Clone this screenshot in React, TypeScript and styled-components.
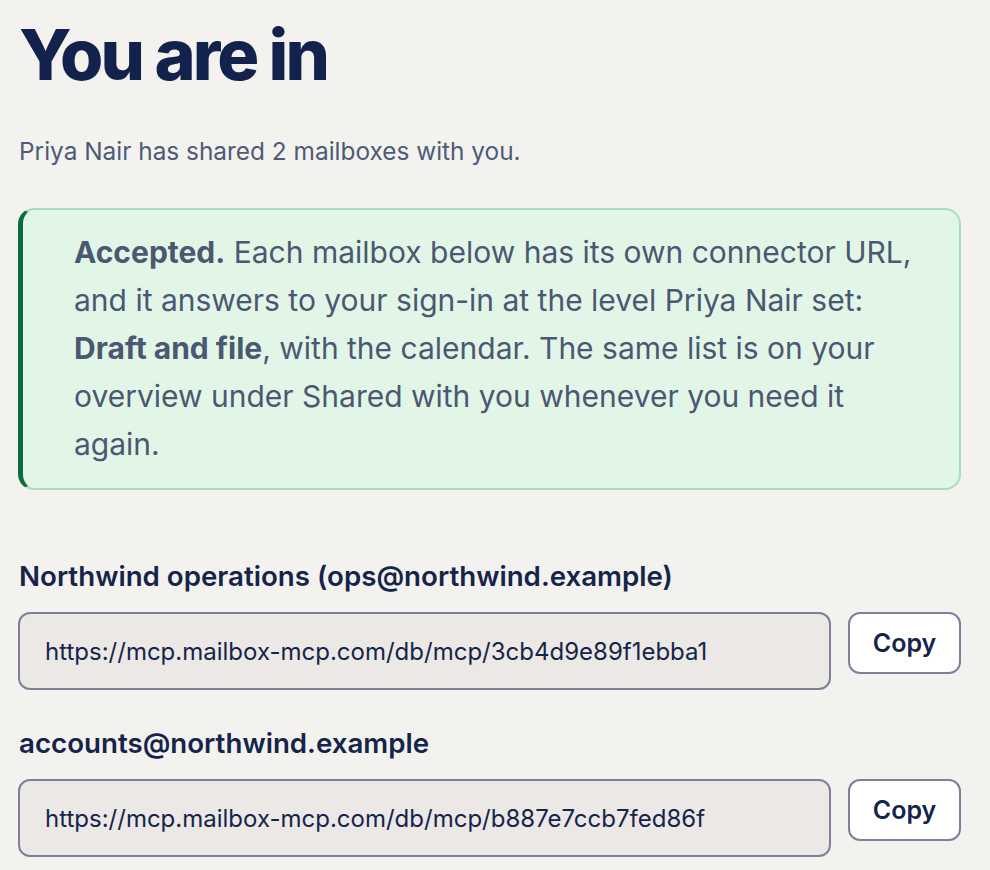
import { FC } from "react";
import styled, { createGlobalStyle } from "styled-components";

const GlobalStyle = createGlobalStyle`
  html, body {
    margin: 0;
    padding: 0;
    background: #f4f2ee;
  }
  body {
    font-family: Inter, "Noto Sans", sans-serif;
    color: #15244a;
  }
  * {
    box-sizing: border-box;
  }
`;

const Page = styled.main`
  width: 990px;
  padding: 13px 29px 0 18px;
`;

const Title = styled.h1`
  margin: 0 0 0 1px;
  font-family: Inter, sans-serif;
  font-size: 70px;
  font-weight: 800;
  letter-spacing: -0.042em;
  line-height: 84px;
  color: #13224d;
`;

const Lead = styled.p`
  margin: 40px 0 0 1px;
  font-size: 24.4px;
  line-height: 28px;
  color: #4d5b78;
`;

const Callout = styled.div`
  margin-top: 43px;
  padding: 18px 40px 20px 51px;
  background: #e2f6e7;
  border: 2px solid #a7dfbb;
  border-left: 5px solid #0e6b3c;
  border-radius: 16px;
  font-size: 30px;
  line-height: 48px;
  color: #4a5872;

  strong {
    font-weight: 700;
  }
`;

const Mailbox = styled.section`
  margin-top: 70px;

  & + & {
    margin-top: 37px;
  }
`;

const Label = styled.h2`
  margin: 0 0 20px 1px;
  font-size: 27.7px;
  font-weight: 600;
  line-height: 32px;
  color: #15244a;
`;

const UrlRow = styled.div`
  display: grid;
  grid-template-columns: 1fr 113px;
  gap: 17px;
  align-items: start;
`;

const UrlField = styled.div`
  height: 78px;
  display: flex;
  align-items: center;
  padding: 0 25px;
  background: #ece8e5;
  border: 2px solid #7c809b;
  border-radius: 12px;
  font-size: 24px;
  color: #15244a;
  white-space: nowrap;
  overflow: hidden;
`;

const CopyButton = styled.button`
  height: 62px;
  background: #ffffff;
  border: 2px solid #7c809b;
  border-radius: 12px;
  font-family: Inter, sans-serif;
  font-size: 25px;
  font-weight: 600;
  color: #15244a;
  cursor: pointer;
`;

const mailboxes = [
  {
    label: "Northwind operations (ops@northwind.example)",
    url: "https://mcp.mailbox-mcp.com/db/mcp/3cb4d9e89f1ebba1",
  },
  {
    label: "accounts@northwind.example",
    url: "https://mcp.mailbox-mcp.com/db/mcp/b887e7ccb7fed86f",
  },
];

const App: FC = () => {
  return (
    <>
      <GlobalStyle />
      <Page>
        <Title>You are in</Title>
        <Lead>Priya Nair has shared 2 mailboxes with you.</Lead>

        <Callout>
          <strong>Accepted.</strong> Each mailbox below has its own connector
          URL, and it answers to your sign-in at the level Priya Nair set:{" "}
          <strong>Draft and file</strong>, with the calendar. The same list is
          on your overview under Shared with you whenever you need it again.
        </Callout>

        {mailboxes.map((box) => (
          <Mailbox key={box.url}>
            <Label>{box.label}</Label>
            <UrlRow>
              <UrlField>{box.url}</UrlField>
              <CopyButton type="button">Copy</CopyButton>
            </UrlRow>
          </Mailbox>
        ))}
      </Page>
    </>
  );
};

export default App;
